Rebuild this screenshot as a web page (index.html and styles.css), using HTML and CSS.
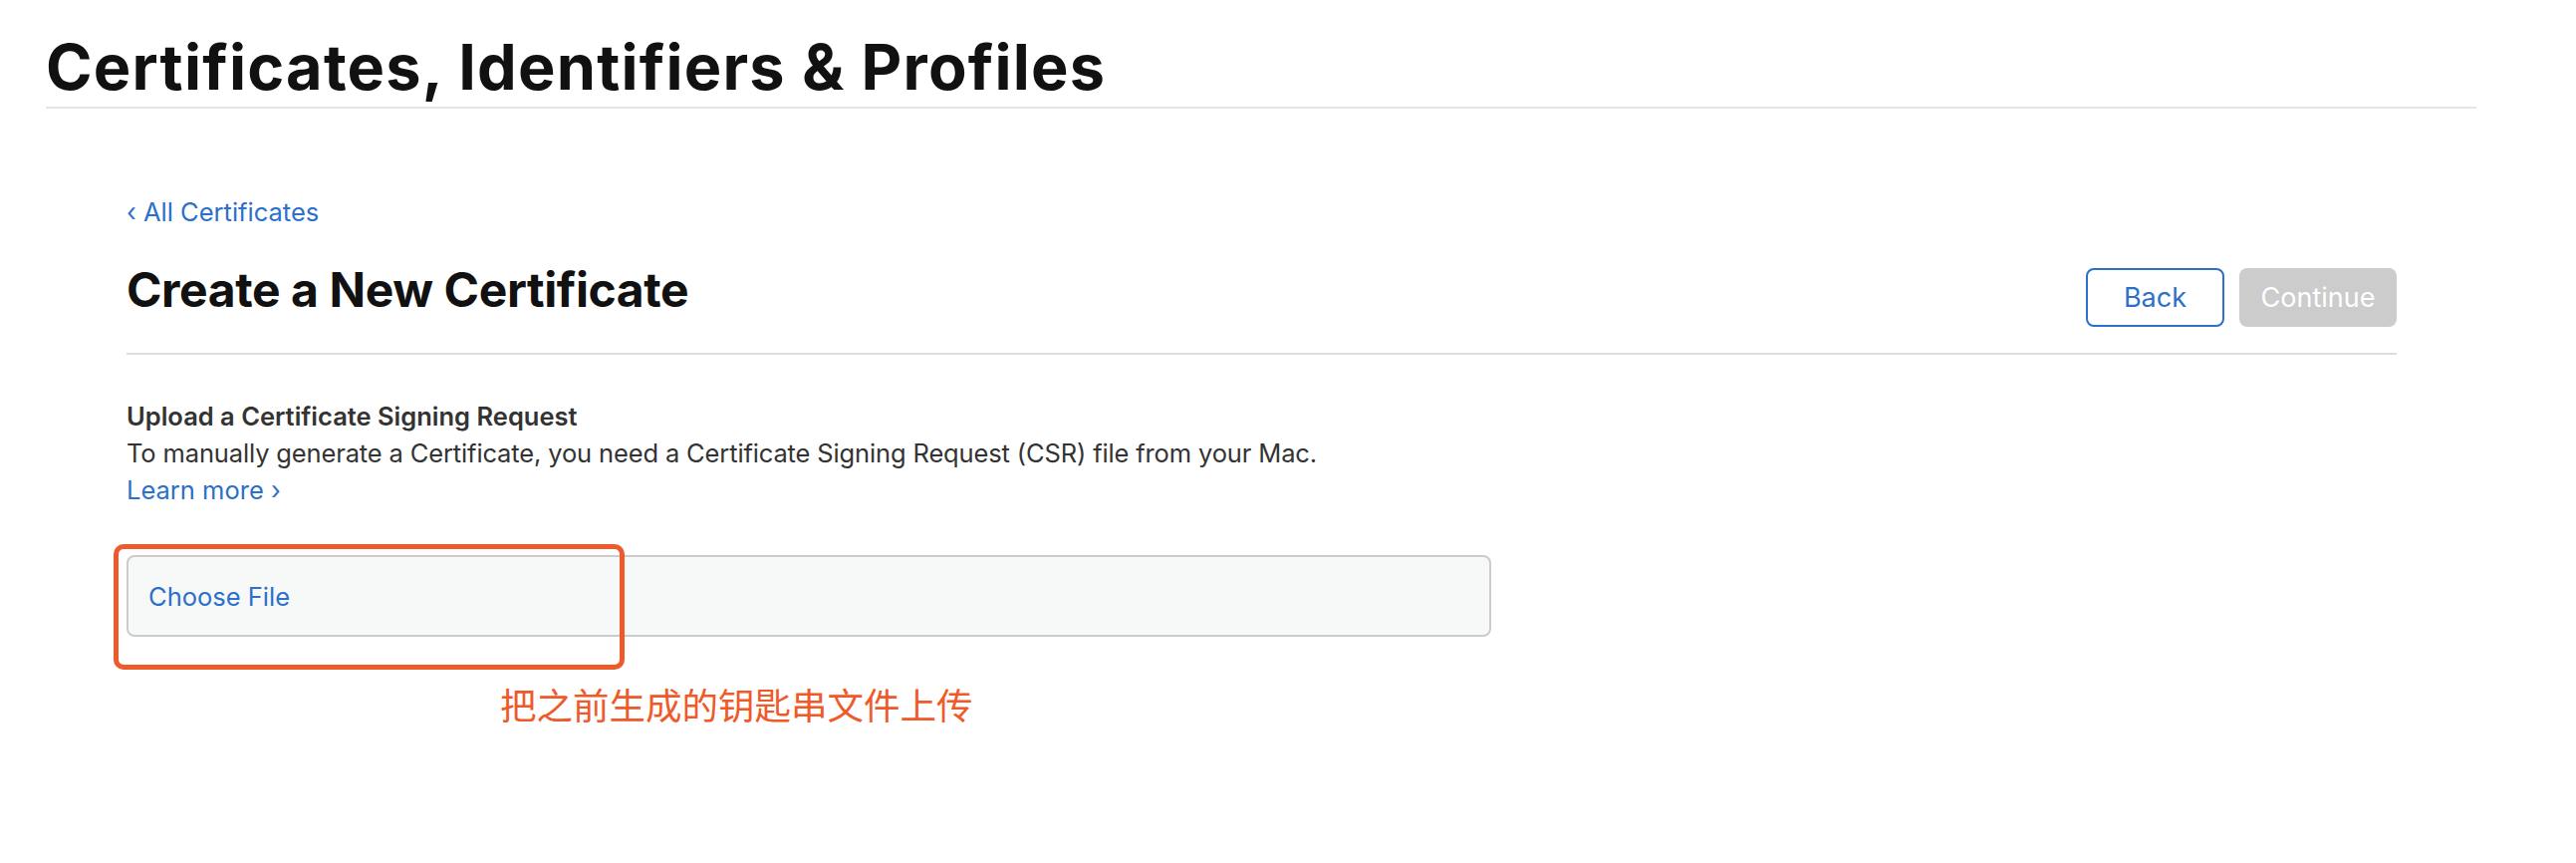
FILE: index.html
```html
<!DOCTYPE html>
<html lang="en">
<head>
<meta charset="utf-8">
<title>Create a New Certificate</title>
<link rel="stylesheet" href="styles.css">
</head>
<body>
<header class="page-header">
  <h1 class="page-title">Certificates, Identifiers &amp; Profiles</h1>
</header>
<main class="content">
  <a class="back-link" href="#"><span class="chev">‹</span> All Certificates</a>
  <div class="title-row">
    <h2 class="section-title">Create a New Certificate</h2>
    <div class="actions">
      <button class="btn btn-outline" type="button">Back</button>
      <button class="btn btn-disabled" type="button">Continue</button>
    </div>
  </div>
  <section class="upload">
    <h3 class="upload-title">Upload a Certificate Signing Request</h3>
    <p class="upload-text">To manually generate a Certificate, you need a Certificate Signing Request (CSR) file from your Mac.</p>
    <a class="learn-more" href="#">Learn more <span class="chev-r">›</span></a>
    <div class="file-wrap">
      <div class="file-box"><span class="file-btn">Choose File</span></div>
      <div class="highlight"></div>
    </div>
    <p class="note">把之前生成的钥匙串文件上传</p>
  </section>
</main>
</body>
</html>
```
FILE: styles.css
```css
* { box-sizing: border-box; }
body {
  margin: 0;
  background: #fff;
  font-family: Inter, "Noto Sans", "Noto Sans CJK SC", sans-serif;
  color: #333;
}
.page-header {
  margin-left: 46px;
  width: 2440px;
  padding-top: 31px;
  padding-bottom: 4px;
  border-bottom: 2px solid #e5e5e5;
}
.page-title {
  margin: 0;
  font-size: 63px;
  line-height: 72px;
  font-weight: 700;
  color: #111;
  letter-spacing: 1.2px;
}
.content {
  margin-left: 127px;
  width: 2279px;
}
.back-link {
  display: block;
  margin-top: 88px;
  font-size: 25.5px;
  line-height: 32px;
  color: #2b70c9;
  text-decoration: none;
}
.title-row {
  display: flex;
  justify-content: space-between;
  align-items: flex-start;
  margin-top: 34px;
  padding-bottom: 26px;
  border-bottom: 2px solid #dedede;
}
.section-title {
  margin: 0;
  font-size: 48px;
  line-height: 56px;
  font-weight: 700;
  color: #111;
  letter-spacing: -0.4px;
}
.actions {
  display: flex;
  gap: 15px;
  margin-top: 6px;
}
.btn {
  height: 59px;
  border-radius: 8px;
  font-family: Inter, "Noto Sans", sans-serif;
  font-size: 27px;
  padding: 0;
}
.btn-outline {
  width: 139px;
  background: #fff;
  border: 2px solid #2b70c9;
  color: #2b70c9;
}
.btn-disabled {
  width: 158px;
  background: #cccccc;
  border: none;
  color: #fff;
}
.upload {
  margin-top: 43px;
}
.upload-title {
  margin: 0;
  font-size: 25.5px;
  line-height: 37px;
  font-weight: 600;
  color: #333;
}
.upload-text {
  margin: 0;
  font-size: 25.5px;
  line-height: 37px;
  letter-spacing: -0.14px;
  color: #333;
}
.learn-more {
  display: block;
  font-size: 25.5px;
  line-height: 37px;
  color: #2b70c9;
  text-decoration: none;
}
.file-wrap {
  position: relative;
  margin-top: 47px;
  width: 1370px;
}
.file-box {
  height: 82px;
  display: flex;
  align-items: center;
  padding-left: 20px;
  background: #f7f8f8;
  border: 2px solid #cccccc;
  border-radius: 8px;
}
.file-btn {
  font-size: 25.5px;
  color: #2b70c9;
}
.highlight {
  position: absolute;
  left: -13px;
  top: -11px;
  width: 513px;
  height: 126px;
  border: 5px solid #ef5a2a;
  border-radius: 10px;
}
.note {
  margin: 50px 0 0 375px;
  font-family: "Noto Sans CJK SC", sans-serif;
  font-size: 36.5px;
  line-height: 1;
  color: #ef5a2a;
}
```
